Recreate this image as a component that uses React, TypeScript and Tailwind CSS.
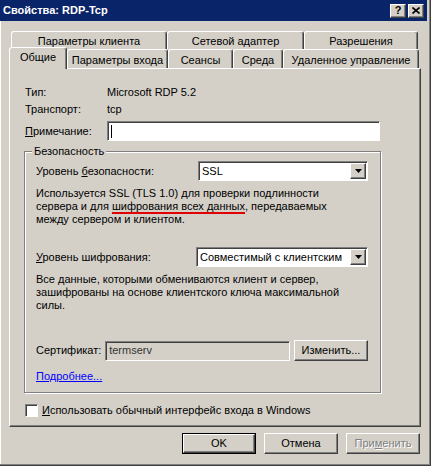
const raised =
  'border border-t-white border-l-white border-r-[#404040] border-b-[#404040] shadow-[inset_-1px_-1px_0_#808080]';
const sunken =
  'border border-t-[#808080] border-l-[#808080] border-r-white border-b-white shadow-[inset_1px_1px_0_#404040]';

function BackTab({ label, w }: { label: string; w: number }) {
  return (
    <div
      className="h-[18px] flex justify-center pt-[3px] rounded-t-[3px] border-t border-l border-r border-t-white border-l-white border-r-[#404040] shadow-[inset_-1px_0_0_#808080]"
      style={{ width: w }}
    >
      {label}
    </div>
  );
}

function FrontTab({
  label,
  w,
  selected,
}: {
  label: string;
  w: number;
  selected?: boolean;
}) {
  if (selected) {
    return (
      <div
        className="h-[22px] flex justify-center pt-[3px] bg-[#d4d0c8] rounded-t-[3px] border-t border-l border-r border-t-white border-l-white border-r-[#404040] shadow-[inset_-1px_0_0_#808080]"
        style={{ width: w }}
      >
        {label}
      </div>
    );
  }
  return (
    <div
      className="h-[19px] mb-px flex justify-center pt-[4px] rounded-t-[3px] border-t border-l border-r border-t-white border-l-white border-r-[#404040] shadow-[inset_-1px_0_0_#808080]"
      style={{ width: w }}
    >
      {label}
    </div>
  );
}

function Combo({ value, w }: { value: string; w: number }) {
  return (
    <div
      className={`h-[20px] bg-white flex items-center justify-between ${sunken}`}
      style={{ width: w }}
    >
      <span className="pl-[3px] whitespace-nowrap overflow-hidden">{value}</span>
      <div
        className={`w-[16px] h-[16px] mr-px bg-[#d4d0c8] flex items-center justify-center ${raised}`}
      >
        <svg width="7" height="4" viewBox="0 0 7 4">
          <path d="M0 0h7L3.5 4z" fill="#000" />
        </svg>
      </div>
    </div>
  );
}

function Button({
  children,
  isDefault,
  disabled,
}: {
  children: React.ReactNode;
  isDefault?: boolean;
  disabled?: boolean;
}) {
  return (
    <div
      className={`w-[74px] h-[21px] ${isDefault ? 'border border-black' : ''}`}
    >
      <div
        className={`h-full flex items-center justify-center ${raised} ${
          disabled ? 'text-[#808080] [text-shadow:1px_1px_0_#fff]' : ''
        }`}
      >
        {children}
      </div>
    </div>
  );
}

export default function App() {
  return (
    <div className="w-[431px] h-[466px] bg-[#d4d0c8] text-[11px] leading-[13px] text-black font-['Liberation_Sans',Arial,sans-serif] overflow-hidden border-r border-b border-r-[#404040] border-b-[#404040] shadow-[inset_-1px_-1px_0_#808080,inset_1px_0_0_#fff]">
      {/* title bar */}
      <div className="h-[21px] mr-[3px] bg-[#0a246a] flex items-center justify-between pl-[3px] pr-[3px]">
        <span className="text-white font-bold">Свойства: RDP-Tcp</span>
        <div className="flex gap-[2px]">
          <div
            className={`w-[16px] h-[14px] bg-[#d4d0c8] flex items-center justify-center font-bold text-[11px] leading-none ${raised}`}
          >
            ?
          </div>
          <div
            className={`w-[16px] h-[14px] bg-[#d4d0c8] flex items-center justify-center ${raised}`}
          >
            <svg width="8" height="7" viewBox="0 0 8 7">
              <path d="M0.5 0.5L7.5 6.5M7.5 0.5L0.5 6.5" stroke="#000" strokeWidth="1.6" />
            </svg>
          </div>
        </div>
      </div>

      {/* tabs */}
      <div className="flex ml-[11px] mt-[10px]">
        <BackTab label="Параметры клиента" w={156} />
        <BackTab label="Сетевой адаптер" w={137} />
        <BackTab label="Разрешения" w={114} />
      </div>
      <div className="flex items-end ml-[9px] -mt-[2px] h-[22px] -mb-px relative z-10">
        <FrontTab label="Общие" w={58} selected />
        <FrontTab label="Параметры входа" w={101} />
        <FrontTab label="Сеансы" w={65} />
        <FrontTab label="Среда" w={50} />
        <FrontTab label="Удаленное управление" w={136} />
      </div>

      {/* page */}
      <div
        className={`ml-[9px] w-[412px] h-[359px] pl-[15px] pt-[17px] ${raised}`}
      >
        <div className="flex">
          <span className="w-[82px]">Тип:</span>
          <span>Microsoft RDP 5.2</span>
        </div>
        <div className="flex mt-[4px]">
          <span className="w-[82px]">Транспорт:</span>
          <span>tcp</span>
        </div>
        <div className="flex items-center mt-[5px]">
          <span className="w-[82px]">
            <span className="underline">П</span>римечание:
          </span>
          <div className={`w-[273px] h-[20px] bg-white flex items-center pl-[3px] ${sunken}`}>
            <div className="w-px h-[13px] bg-black" />
          </div>
        </div>

        {/* security group */}
        <div className="relative -ml-px mt-[10px] w-[357px] border border-[#808080] shadow-[inset_1px_1px_0_#fff,1px_1px_0_#fff] pl-[11px] pr-[12px] pt-[9px] pb-[9px]">
          <span className="absolute -top-[7px] left-[7px] bg-[#d4d0c8] px-[2px]">
            Безопасность
          </span>
          <div className="flex items-center justify-between">
            <span>
              Уровень <span className="underline">б</span>езопасности:
            </span>
            <Combo value="SSL" w={170} />
          </div>
          <p className="mt-[6px]">
            Используется SSL (TLS 1.0) для проверки подлинности
            <br />
            сервера и для{' '}
            <span className="underline decoration-[#e00000] decoration-2 underline-offset-[2px]">
              шифрования всех данных
            </span>
            , передаваемых
            <br />
            между сервером и клиентом.
          </p>
          <div className="flex items-center justify-between mt-[21px]">
            <span>
              <span className="underline">У</span>ровень шифрования:
            </span>
            <Combo value="Совместимый с клиентским" w={172} />
          </div>
          <p className="mt-[6px]">
            Все данные, которыми обмениваются клиент и сервер,
            <br />
            зашифрованы на основе клиентского ключа максимальной
            <br />
            силы.
          </p>
          <div className="flex items-center mt-[28px]">
            <span className="w-[70px]">Сертификат:</span>
            <div className={`w-[187px] h-[20px] flex items-center pl-[3px] text-[#333] ${sunken}`}>
              termserv
            </div>
            <div className="ml-[4px]">
              <Button>Изменить...</Button>
            </div>
          </div>
          <div className="mt-[9px] text-[#0000ff] underline">Подробнее...</div>
        </div>

        <div className="flex items-center mt-[11px]">
          <div className={`w-[13px] h-[13px] bg-white ${sunken}`} />
          <span className="ml-[4px]">
            <span className="underline">И</span>спользовать обычный интерфейс входа в Windows
          </span>
        </div>
      </div>

      {/* buttons */}
      <div className="flex justify-end gap-[8px] mt-[6px] pr-[10px]">
        <Button isDefault>OK</Button>
        <Button>Отмена</Button>
        <Button disabled>
          При<span className="underline">м</span>енить
        </Button>
      </div>
    </div>
  );
}
